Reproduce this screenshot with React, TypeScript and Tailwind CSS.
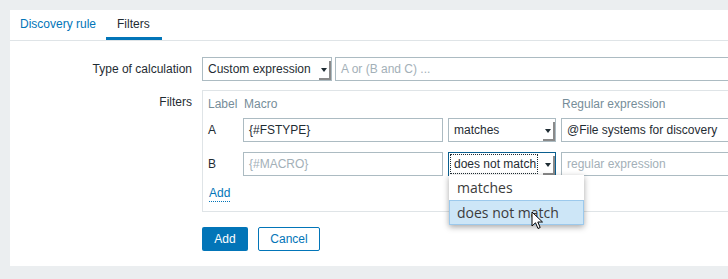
import React from "react";

const font = { fontFamily: '"Liberation Sans", Arial, sans-serif' };

const Select: React.FC<{ value: string; width: string; focused?: boolean }> = ({
  value,
  width,
  focused,
}) => (
  <div
    className={`relative h-[24px] ${width} bg-white border ${
      focused ? "border-[#0b5f8f]" : "border-[#acbbc2]"
    } flex items-center text-[#1f2c33] whitespace-nowrap`}
  >
    {focused ? (
      <span className="ml-[1px] h-[20px] flex items-center pl-[3px] border border-dotted border-[#1f2c33] w-[88px] overflow-hidden">
        {value}
      </span>
    ) : (
      <span className="pl-[5px]">{value}</span>
    )}
    <span className="absolute right-0 top-[3px] bottom-0 w-[12px] border-r-2 border-b-2 border-[#8a8a8a] flex items-center justify-center">
      <span className="w-0 h-0 border-l-[3px] border-r-[3px] border-t-[4px] border-l-transparent border-r-transparent border-t-[#1f2c33]" />
    </span>
  </div>
);

const Input: React.FC<{ value?: string; placeholder?: string; width: string }> = ({
  value,
  placeholder,
  width,
}) => (
  <div
    className={`h-[24px] ${width} bg-white border border-[#acbbc2] flex items-center px-[5px] shrink-0`}
  >
    {value ? (
      <span className="text-[#1f2c33] whitespace-nowrap">{value}</span>
    ) : (
      <span className="text-[#a3b0b8] whitespace-nowrap">{placeholder}</span>
    )}
  </div>
);

export default function App() {
  return (
    <div
      className="relative w-[728px] h-[279px] overflow-hidden bg-[#ebeef0] text-[12px] leading-[14px]"
      style={font}
    >
      <div className="ml-[10px] mt-[10px] w-[760px] h-[256px] bg-white">
        {/* tabs */}
        <div className="flex h-[31px] border-b border-[#dfe4e7]">
          <div className="px-[10px] flex items-center pb-[3px] text-[#0275b8]">Discovery rule</div>
          <div className="pl-[11px] pr-[12px] flex items-center border-b-[3px] border-[#0275b8] text-[#1f2c33]">
            Filters
          </div>
        </div>

        <div className="pt-[16px]">
          <div className="flex items-center">
            <div className="w-[182px] text-right text-[#1f2c33]">Type of calculation</div>
            <div className="ml-[10px] flex">
              <Select value="Custom expression" width="w-[130px]" />
              <div className="ml-[3px]">
                <Input placeholder="A or (B and C) ..." width="w-[420px]" />
              </div>
            </div>
          </div>

          <div className="flex items-start mt-[9px]">
            <div className="w-[182px] text-right text-[#1f2c33] pt-[5px]">Filters</div>
            <div className="ml-[10px]">
              <div className="w-[560px] border border-[#dfe4e7] pl-[5px] pb-[11px]">
                <div className="flex h-[27px] pt-[6px] text-[#768d99]">
                  <div className="w-[36px]">Label</div>
                  <div className="w-[318px]">Macro</div>
                  <div>Regular expression</div>
                </div>
                <div className="flex items-center h-[24px]">
                  <div className="w-[36px] text-[#1f2c33]">A</div>
                  <Input value="{#FSTYPE}" width="w-[200px]" />
                  <div className="ml-[5px]">
                    <Select value="matches" width="w-[108px]" />
                  </div>
                  <div className="ml-[5px]">
                    <Input value="@File systems for discovery" width="w-[200px]" />
                  </div>
                </div>
                <div className="flex items-center h-[24px] mt-[10px]">
                  <div className="w-[36px] text-[#1f2c33]">B</div>
                  <Input placeholder="{#MACRO}" width="w-[200px]" />
                  <div className="ml-[5px]">
                    <Select value="does not match" width="w-[108px]" focused />
                  </div>
                  <div className="ml-[5px]">
                    <Input placeholder="regular expression" width="w-[200px]" />
                  </div>
                </div>
                <div className="mt-[10px] pl-[1px]">
                  <span className="text-[#0275b8] border-b border-dotted border-[#0275b8] pb-[1px]">
                    Add
                  </span>
                </div>
              </div>

              <div className="flex mt-[15px]">
                <button className="h-[24px] w-[46px] rounded-[2px] bg-[#0275b8] text-white">
                  Add
                </button>
                <button className="ml-[10px] h-[24px] w-[62px] rounded-[2px] border border-[#0275b8] bg-white text-[#0275b8]">
                  Cancel
                </button>
              </div>
            </div>
          </div>
        </div>
      </div>

      {/* open dropdown list */}
      <div
        className="absolute left-[449px] top-[175px] w-[135px] bg-white shadow-[0_2px_6px_rgba(0,0,0,0.35)] text-[14px] leading-[18px] text-[#3c3c3c] whitespace-nowrap"
        style={{ fontFamily: '"Open Sans", "Noto Sans", sans-serif' }}
      >
        <div className="h-[25px] flex items-center pl-[8px]">matches</div>
        <div className="h-[25px] flex items-center pl-[7px] bg-[#cde6f7] border border-[#9cc9ec]">
          does not match
        </div>
      </div>

      {/* mouse pointer */}
      <svg
        className="absolute left-[531px] top-[211px]"
        width="13"
        height="19"
        viewBox="0 0 13 19"
      >
        <path
          d="M1 1 L1 15 L4.5 11.8 L7 17.5 L9.2 16.5 L6.8 11 L11.5 11 Z"
          fill="#fff"
          stroke="#000"
          strokeWidth="1"
          strokeLinejoin="round"
        />
      </svg>
    </div>
  );
}
